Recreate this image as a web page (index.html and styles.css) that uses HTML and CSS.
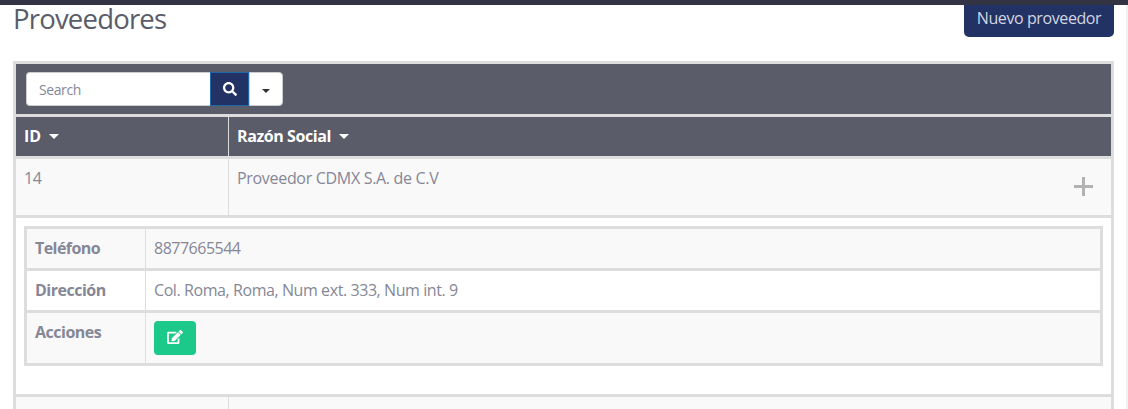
FILE: index.html
```html
<!DOCTYPE html>
<html lang="es">
<head>
<meta charset="utf-8">
<title>Proveedores</title>
<link rel="stylesheet" href="styles.css">
</head>
<body>
<div class="topbar"></div>
<div class="page">
  <header class="heading">
    <h1 class="title">Proveedores</h1>
    <button class="new-button" type="button"><span>Nuevo proveedor</span></button>
  </header>
  <main class="grid">
    <div class="toolbar">
      <div class="search">
        <input class="search-input" type="text" placeholder="Search">
        <button class="search-button" type="button" aria-label="Buscar">
          <svg width="14" height="14" viewBox="0 0 512 512"><path fill="#fff" d="M505 442.700 405.300 343c-4.500-4.500-10.600-7-17-7H372c27.600-35.300 44-79.700 44-128C416 93.100 322.900 0 208 0S0 93.100 0 208s93.100 208 208 208c48.300 0 92.700-16.400 128-44v16.300c0 6.400 2.500 12.500 7 17l99.700 99.700c9.400 9.400 24.600 9.400 33.900 0l28.300-28.300c9.400-9.400 9.400-24.600.1-34zM208 336c-70.700 0-128-57.200-128-128 0-70.700 57.200-128 128-128 70.700 0 128 57.200 128 128 0 70.700-57.200 128-128 128z"/></svg>
        </button>
        <button class="search-menu" type="button" aria-label="Campos"><i class="caret caret-dark"></i></button>
      </div>
    </div>
    <div class="row head">
      <div class="cell id"><span class="t-id">ID</span><i class="caret"></i></div>
      <div class="cell"><span class="t-razon">Razón Social</span><i class="caret"></i></div>
    </div>
    <div class="row item">
      <div class="cell id"><span>14</span></div>
      <div class="cell name"><span class="t-name">Proveedor CDMX S.A. de C.V</span>
        <svg class="plus" width="19" height="19" viewBox="0 0 19 19"><path stroke="#b2b2b2" stroke-width="3" d="M0 9.500H19M9.500 0V19"/></svg>
      </div>
    </div>
    <div class="detail">
      <dl class="info">
        <div class="line"><dt class="t-tel">Teléfono</dt><dd class="t-num">8877665544</dd></div>
        <div class="line plain"><dt>Dirección</dt><dd>Col. Roma, Roma, Num ext. 333, Num int. 9</dd></div>
        <div class="line actions"><dt>Acciones</dt><dd class="tools">
          <button class="edit" type="button" aria-label="Editar"><svg width="16" height="14" viewBox="0 0 576 512"><path fill="#fff" d="M402.600 83.200l90.200 90.200c3.800 3.800 3.800 10 0 13.800L274.400 405.600l-92.800 10.300c-12.400 1.400-22.900-9.100-21.500-21.500l10.300-92.800L388.800 83.200c3.800-3.800 10-3.800 13.800 0zm162-22.900l-48.800-48.800c-15.200-15.200-39.900-15.200-55.200 0l-35.400 35.400c-3.800 3.800-3.800 10 0 13.800l90.200 90.200c3.800 3.800 10 3.800 13.800 0l35.400-35.400c15.200-15.300 15.200-40 0-55.200zM384 346.200V448H64V128h229.800c3.200 0 6.200-1.300 8.500-3.500l40-40c7.600-7.600 2.200-20.500-8.500-20.500H48C21.500 64 0 85.500 0 112v352c0 26.500 21.500 48 48 48h352c26.500 0 48-21.500 48-48V306.200c0-10.700-12.900-16-20.500-8.500l-40 40c-2.200 2.300-3.500 5.300-3.500 8.500z"/></svg></button>
        </dd></div>
      </dl>
    </div>
    <div class="row next"><div class="cell id"></div><div class="cell"></div></div>
  </main>
</div>
</body>
</html>
```

FILE: styles.css
```css
* { box-sizing: border-box; }
body {
  margin: 0;
  height: 409px;
  overflow: hidden;
  display: flex;
  flex-direction: column;
  background: #fff;
  color: #858796;
  font: 16px/24px "Open Sans", "Noto Sans", sans-serif;
}
button { font: inherit; margin: 0; padding: 0; cursor: pointer; }
.topbar { flex: none; height: 5px; background: #323444; }
.page {
  flex: 1;
  min-height: 0;
  padding: 0 12px 0 13px;
  border-right: 2px solid #f1f1f1;
}
.heading { display: flex; justify-content: space-between; align-items: flex-start; height: 56px; }
.title { margin: -3px 0 0; font-size: 27.500px; line-height: 34px; font-weight: 400; letter-spacing: -.8px; color: #5a5c69; }
.new-button {
  width: 150px;
  height: 32px;
  padding-bottom: 6px;
  border: 0;
  border-radius: 0 0 5px 5px;
  background: #223265;
  color: #d3d6e0;
  letter-spacing: -.4px;
  white-space: nowrap;
}
.grid { width: 1101px; border: 3px solid #ddd; border-bottom: 0; }
.toolbar { height: 53px; padding: 8px 10px; background: #5a5c69; border-bottom: 3px solid #ddd; }
.search { display: flex; width: 257px; height: 34px; }
.search-input {
  width: 184px;
  padding: 2px 12px 0;
  border: 1px solid #ccc;
  border-right: 0;
  border-radius: 4px 0 0 4px;
  background: #fff;
  font: 14px/20px "Open Sans", "Noto Sans", sans-serif;
  letter-spacing: -.4px;
}
.search-input::placeholder { color: #858796; opacity: 1; }
.search-button { width: 39px; border: 1px solid #1f67a8; background: #223265; display: flex; align-items: center; justify-content: center; }
.search-menu { width: 34px; border: 1px solid #ccc; border-radius: 0 4px 4px 0; background: #fff; display: flex; align-items: center; justify-content: center; padding-top: 3px; }
.caret { display: inline-block; border: 5px solid transparent; border-top-color: #fff; border-bottom: 0; }
.caret-dark { border-width: 4px 4px 0; border-top-color: #333; }
.row { display: grid; grid-template-columns: 213px 1fr; border-bottom: 3px solid #ddd; background: #f9f9f9; }
.cell { padding: 7px 8px; white-space: nowrap; letter-spacing: -.31px; }
.id { border-right: 1px solid #ddd; }
.head { height: 42px; background: #5a5c69; color: #fff; font-weight: 700; }
.head .cell { display: flex; align-items: center; gap: 8px; padding-bottom: 8px; }
.t-id { letter-spacing: 0; }
.t-razon { letter-spacing: -.42px; }
.item { height: 59px; }
.name { display: flex; justify-content: space-between; }
.plus { margin: 11px 10px 0 0; }
.detail { height: 179px; padding: 8px; border-bottom: 3px solid #ddd; background: #fff; }
.info { margin: 0; border: 3px solid #ddd; }
.line { display: grid; grid-template-columns: 119px 1fr; height: 42px; border-bottom: 3px solid #ddd; background: #f9f9f9; }
.plain { background: #fff; }
.actions { height: 50px; border-bottom: 0; }
dt { padding: 7px 8px; border-right: 1px solid #ddd; font-weight: 700; letter-spacing: -.5px; }
dd { margin: 0; padding: 7px 8px; letter-spacing: -.42px; }
.t-tel { letter-spacing: -.55px; }
.t-num { letter-spacing: -.5px; }
.tools { padding-top: 8px; }
.edit { display: flex; align-items: center; justify-content: center; width: 42px; height: 34px; padding-bottom: 2px; border: 0; border-radius: 4px; background: #1cc88a; }
.next { height: 12px; border-bottom: 0; }
.next .cell { padding: 0; }
```
